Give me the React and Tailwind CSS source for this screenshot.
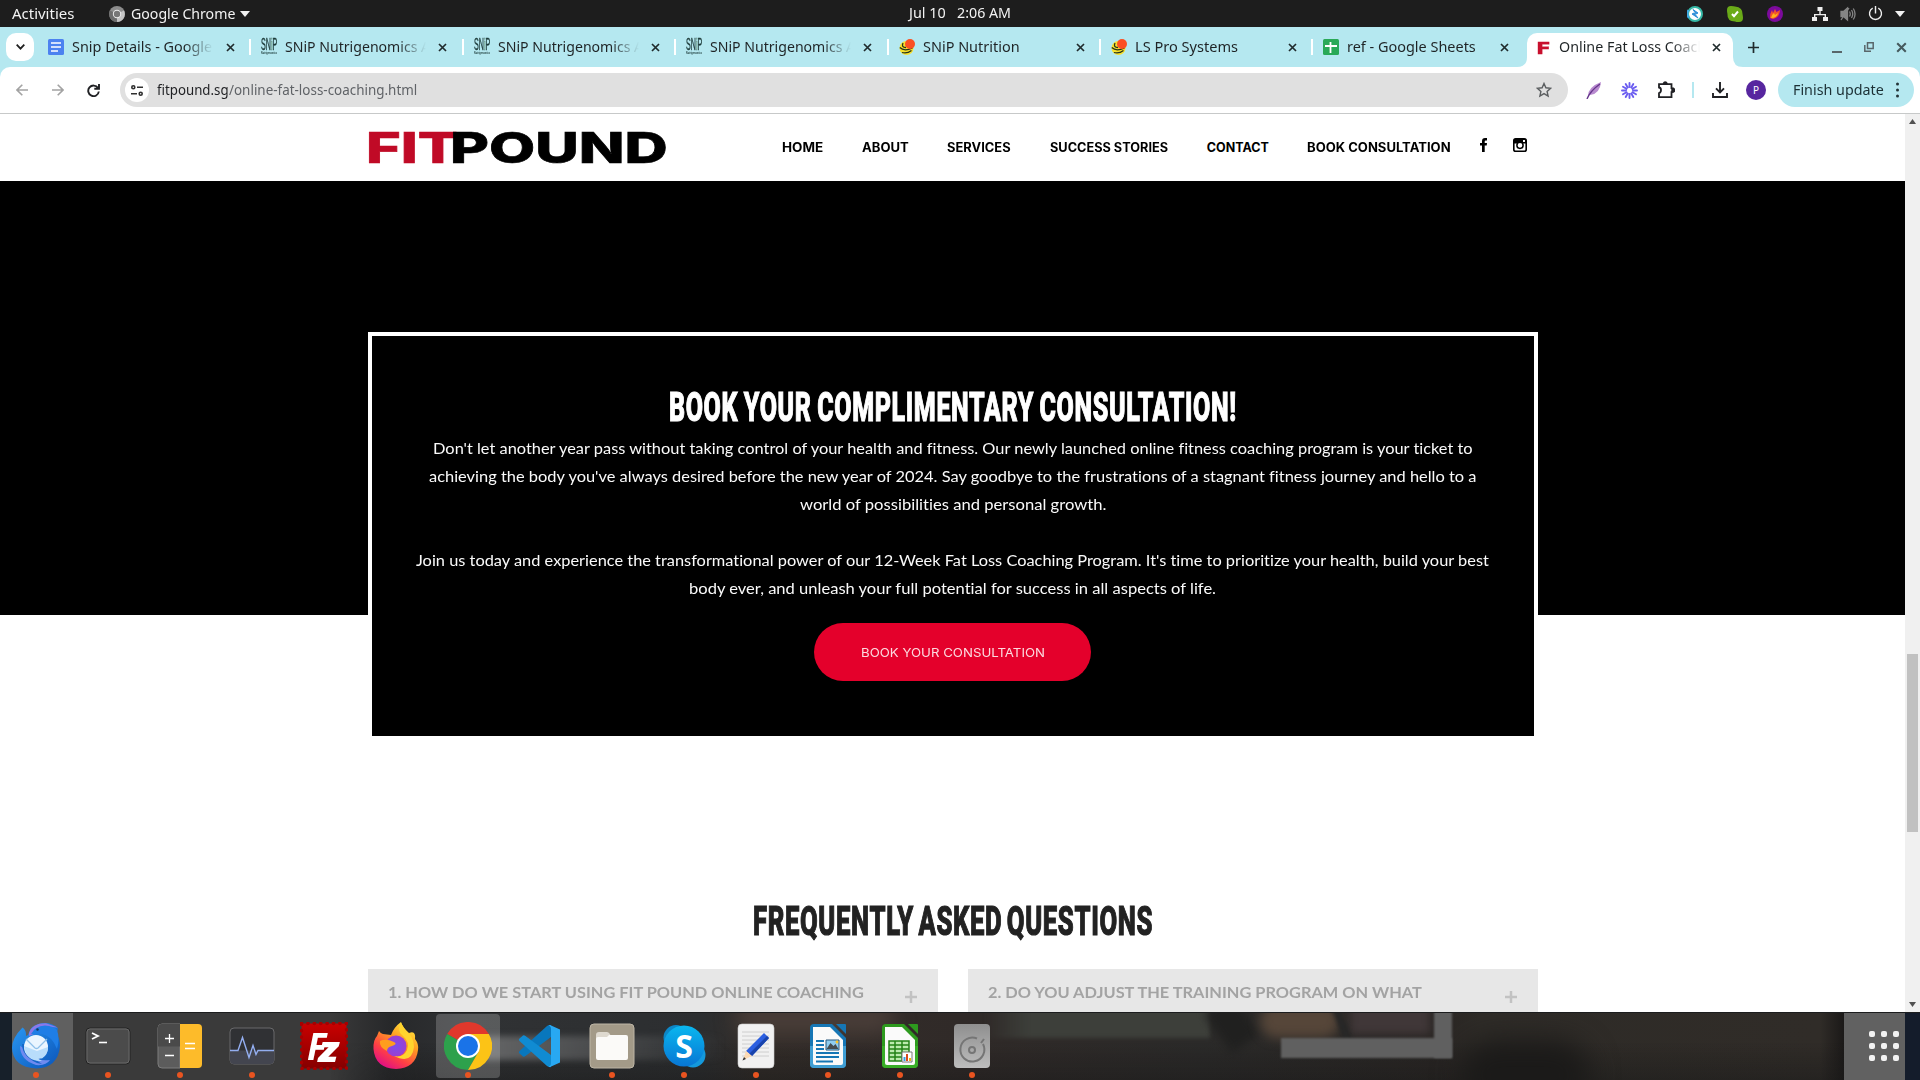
import { useLayoutEffect, useRef, useState } from "react";

// Scales a single line of text horizontally so it fills its container's width.
function Fit({ className = "", inner = "", children }) {
  const box = useRef(null);
  const text = useRef(null);
  const [k, setK] = useState(1);
  useLayoutEffect(() => {
    setK(box.current.clientWidth / text.current.offsetWidth);
  }, []);
  return (
    <span ref={box} className={`block shrink-0 ${className}`}>
      <span
        ref={text}
        className={`inline-block origin-left whitespace-nowrap ${inner}`}
        style={{ transform: `scaleX(${k})` }}
      >
        {children}
      </span>
    </span>
  );
}

const UI = "font-['Noto_Sans',sans-serif]";

/* ---------- System bar ---------- */

function SystemBar() {
  return (
    <div className={`relative flex h-[27px] shrink-0 items-center bg-[#1d1d1d] pl-3 text-[14px] leading-[27px] text-[#f2f2f2] ${UI}`}>
      <Fit className="w-[62px]">Activities</Fit>
      <svg className="ml-[35px] h-4 w-4 shrink-0" viewBox="0 0 16 16">
        <circle cx="8" cy="8" r="8" fill="#8c8c8c" />
        <path d="M8 8 15 4.500A8 8 0 0 1 8 16Z" fill="#c4c4c4" />
        <path d="M1 4.500 8 8 8 16A8 8 0 0 1 1 4.500" fill="#6d6d6d" />
        <circle cx="8" cy="8" r="4.200" fill="#ededed" />
        <circle cx="8" cy="8" r="3.200" fill="#777" />
      </svg>
      <Fit className="ml-1.5 w-[104px]">Google Chrome</Fit>
      <svg className="ml-[5px] h-[6px] w-[10px]" viewBox="0 0 10 6"><path d="M0 0h10L5 6z" fill="#f2f2f2" /></svg>
      <div className="absolute inset-x-0 top-0 flex h-[27px] justify-center gap-[11px] leading-[26px]">
        <Fit className="w-[37px]">Jul 10</Fit>
        <Fit className="w-[54px]">2:06 AM</Fit>
      </div>
      <div className="ml-auto flex items-center pr-[15px]">
        <svg className="h-4 w-4" viewBox="0 0 16 16">
          <circle cx="8" cy="8" r="7" fill="#fff" stroke="#35b8a6" strokeWidth="2" />
          <path d="M1.500 4A7 7 0 0 0 2 12" stroke="#3fa8e8" strokeWidth="2" fill="none" />
          <path d="M6 3.500 11 7 9 8zM5 8l2-1 4 5z" fill="#2e8fd8" stroke="#2e8fd8" />
        </svg>
        <svg className="ml-6 h-4 w-4" viewBox="0 0 16 16">
          <path d="M0 4Q0 0 4 0 7 0 8 .5 16 1 15.700 9 16 11 16 12 16 16 12 16 9 16 8 15.500 0 15.500.4 7.500 0 6 0 4" fill="#6aaa18" />
          <path d="m5 8 2 2.200L11 5.500" fill="none" stroke="#fff" strokeWidth="2" />
        </svg>
        <svg className="ml-6 h-4 w-4" viewBox="0 0 16 16">
          <circle cx="8" cy="8" r="8" fill="#7c0a9c" />
          <path d="M3 12Q3 7 5 4L6 7 8 3 9.500 6 13 4Q13 11 6 13z" fill="#f4512a" />
          <path d="M4 12Q5 8 7 7L8 9 11 7Q10 12 4 12" fill="#ffb31a" />
        </svg>
        <svg className="ml-[29px] h-4 w-4" viewBox="0 0 16 16" fill="#eee">
          <path d="M5.500 1h5v4h-5zM0 11h5v4H0zM11 11h5v4h-5zM7.300 5h1.400v3H14v3h-1.400V9.300H3.400V11H2V8h5.300z" />
        </svg>
        <svg className="ml-3 h-4 w-4" viewBox="0 0 16 16" fill="none" stroke="#858585" strokeWidth="1.300">
          <path d="M1 5.500h2.500L7.500 2v12L3.500 10.500H1z" fill="#858585" />
          <path d="M9.500 5.500Q11 8 9.500 10.500M11.500 4q2.500 4 0 8M13.300 2.500q3.500 5.500 0 11M1 14 9 2" />
        </svg>
        <svg className="ml-3 h-[15px] w-[15px]" viewBox="0 0 16 16" fill="none" stroke="#eee" strokeWidth="1.500">
          <path d="M8 0v8M5 2.300a6.400 6.400 0 1 0 6 0" />
        </svg>
        <svg className="ml-3 h-[6px] w-[10px]" viewBox="0 0 10 6"><path d="M0 0h10L5 6z" fill="#f2f2f2" /></svg>
      </div>
    </div>
  );
}

/* ---------- Browser chrome ---------- */

function DocsIcon() {
  return (
    <svg className="h-4 w-4" viewBox="0 0 16 16">
      <rect width="16" height="16" rx="1.500" fill="#4c82f0" />
      <path d="M3 4h10M3 8h10M3 12h7" stroke="#fff" strokeWidth="1.700" />
    </svg>
  );
}
function SnipIcon() {
  return (
    <div className="-mt-px flex h-[17px] w-4 flex-col font-['Liberation_Sans',sans-serif] text-[#1d3b3a]">
      <Fit className="h-[13px] w-4 leading-[13px]" inner="align-top text-[16px] leading-[13px] [-webkit-text-stroke:0.4px_#1d3b3a]">SN<span className="text-[#8cc4a0]">i</span>P</Fit>
      <Fit className="h-1 w-4 text-[4px] leading-[4px]" inner="align-top font-bold">Nutrigenomics</Fit>
    </div>
  );
}
function NutritionIcon() {
  return (
    <svg className="h-4 w-4" viewBox="0 0 16 16">
      <circle cx="7.500" cy="9" r="7" fill="#f7e02c" />
      <path d="M.8 8.500Q5 12.800 13.500 9M3 13.500q5 1.500 9.500-2M4 4Q2 8.500 7 8.500" fill="none" stroke="#26331c" strokeWidth="1.300" />
      <circle cx="11" cy="5" r="5" fill="#fb4f22" />
    </svg>
  );
}
function SheetsIcon() {
  return (
    <svg className="h-4 w-4" viewBox="0 0 16 16">
      <rect width="16" height="16" rx="1.500" fill="#29a957" />
      <path d="M2 7h12M7.500 3v11" stroke="#fff" strokeWidth="1.800" />
    </svg>
  );
}
function FIcon() {
  return (
    <Fit className="-mt-0.5 h-4 w-[15px]" inner="font-['DejaVu_Sans',sans-serif] text-[16px] font-bold leading-[16px] text-[#c8102e] [-webkit-text-stroke:0.3px_#c8102e]">F</Fit>
  );
}

const tabs = [
  { icon: DocsIcon, title: "Snip Details - Google", w: "w-[140px]" },
  { icon: SnipIcon, title: "SNiP Nutrigenomics A", w: "w-[145px]", sep: true },
  { icon: SnipIcon, title: "SNiP Nutrigenomics A", w: "w-[145px]", sep: true },
  { icon: SnipIcon, title: "SNiP Nutrigenomics A", w: "w-[145px]", sep: true },
  { icon: NutritionIcon, title: "SNiP Nutrition", w: "w-[97px]", sep: true },
  { icon: NutritionIcon, title: "LS Pro Systems", w: "w-[103px]", sep: true },
  { icon: SheetsIcon, title: "ref - Google Sheets", w: "w-[129px]", sep: true, short: true },
  { icon: FIcon, title: "Online Fat Loss Coach", w: "w-[147px]", active: true },
];

function Close({ className = "h-[9px] w-[9px]" }) {
  return (
    <svg className={`shrink-0 ${className}`} viewBox="0 0 9 9"><path d="m1 1 7 7M8 1 1 8" stroke="#202b2d" strokeWidth="1.700" /></svg>
  );
}

function TabStrip() {
  return (
    <div className={`flex h-10 shrink-0 items-start bg-[#b5e8f0] pt-1.5 text-[14px] text-[#1f2426] ${UI}`}>
      <div className="ml-1.5 flex h-7 w-7 shrink-0 items-center justify-center rounded-[10px] bg-white">
        <svg className="h-[6px] w-[9px]" viewBox="0 0 9 6" fill="none" stroke="#1f1f1f" strokeWidth="1.800"><path d="m.7.7 3.800 3.900L8.300.7" /></svg>
      </div>
      <div className="ml-[3px] flex">
        {tabs.map((t, i) => {
          const Icon = t.icon;
          return (
            <div key={i} className="relative flex h-[34px] w-[212.4px] shrink-0">
              {t.active && (
                <div className="absolute top-0 left-[3px] h-[34px] w-[206px] rounded-t-[10px] bg-white">
                  <svg className="absolute bottom-0 -left-[10px] h-[10px] w-[10px]" viewBox="0 0 10 10"><path d="M10 0v10H0Q10 10 10 0" fill="#fff" /></svg>
                  <svg className="absolute -right-[10px] bottom-0 h-[10px] w-[10px]" viewBox="0 0 10 10"><path d="M0 0v10h10Q0 10 0 0" fill="#fff" /></svg>
                </div>
              )}
              <div className="relative flex h-7 w-full items-center">
                <div className={t.sep ? "h-4 w-[2px] bg-white" : "h-4 w-[2px]"} />
                <div className={t.active ? "ml-[10px] w-4" : t.sep ? "ml-[10px] w-4" : "ml-[9px] w-4"}><Icon /></div>
                <div className={`${t.active ? "ml-[7px]" : "ml-2"} h-7 w-[141px] overflow-hidden leading-7 ${t.short ? "" : "[mask-image:linear-gradient(to_right,black_80%,transparent)]"}`}>
                  <Fit className={t.w}>{t.title}</Fit>
                </div>
                <Close className={t.active || t.sep ? "ml-3 h-[9px] w-[9px]" : "ml-[13px] h-[9px] w-[9px]"} />
              </div>
            </div>
          );
        })}
      </div>
      <div className="ml-3 flex h-7 flex-1 items-center">
        <svg className="h-[11px] w-[11px]" viewBox="0 0 11 11"><path d="M5.500 0v11M0 5.500h11" stroke="#202b2d" strokeWidth="1.700" /></svg>
        <div className="mr-[13px] ml-auto flex items-center gap-[22px]">
          <svg className="h-[11px] w-[10px]" viewBox="0 0 10 11"><path d="M0 10h10" stroke="#59666a" strokeWidth="2" /></svg>
          <svg className="h-[10px] w-[10px]" viewBox="0 0 10 10" fill="none" stroke="#59666a" strokeWidth="1.500"><path d="M3.500.8h5.700v5.700H3.500zM.8 3v6.200H7" /></svg>
          <Close className="h-[11px] w-[11px] opacity-75" />
        </div>
      </div>
    </div>
  );
}

function Toolbar() {
  return (
    <div className="bg-[#b5e8f0]">
      <div className={`flex h-[47px] items-center rounded-t-[10px] border-b border-[#c7c9c9] bg-white text-[14px] ${UI}`}>
        <svg className="ml-4 h-3 w-3" viewBox="0 0 12 12" fill="none" stroke="#a3a3a3" strokeWidth="1.600"><path d="M12 6H1M6.300.7 1 6l5.300 5.300" /></svg>
        <svg className="ml-6 h-3 w-3" viewBox="0 0 12 12" fill="none" stroke="#a3a3a3" strokeWidth="1.600"><path d="M0 6h11M5.700.7 11 6l-5.300 5.300" /></svg>
        <svg className="ml-[23px] h-[13px] w-[13px]" viewBox="0 0 13 13" fill="none" stroke="#202124" strokeWidth="1.900"><path d="M11 4A5.300 5.300 0 1 0 11.800 7.500M12 0v4.700H7.300" /></svg>
        <div className="ml-5 flex h-[34px] w-[1448px] items-center rounded-full bg-[#e0e0e0] pl-[5px]">
          <div className="flex h-6 w-6 items-center justify-center rounded-full bg-white">
            <svg className="h-[11px] w-3" viewBox="0 0 12 11" fill="none" stroke="#303030" strokeWidth="1.600"><circle cx="2.300" cy="2.300" r="1.500" /><path d="M6 2.300h6M0 8.700h6" /><circle cx="9.700" cy="8.700" r="1.500" /></svg>
          </div>
          <Fit className="-mt-0.5 ml-2 w-[72px]" inner="text-[#1f2023]">fitpound.sg</Fit>
          <Fit className="-mt-0.5 w-[188px]" inner="text-[#606367]">/online-fat-loss-coaching.html</Fit>
          <svg className="mr-4 ml-auto h-4 w-4" viewBox="0 0 16 16" fill="none" stroke="#5b5e60" strokeWidth="1.400"><path d="m8 1.500 1.900 4.300 4.700.5-3.500 3.100 1 4.600L8 11.600 3.900 14l1-4.600L1.400 6.300l4.700-.5z" /></svg>
        </div>
        <svg className="ml-[18px] h-[17px] w-4" viewBox="0 0 16 17"><path d="M2 14Q2 5 15 0 14 12 4 13z" fill="#b98bd0" /><path d="M1 17Q4 9 14 2" stroke="#66368c" strokeWidth="1.400" fill="none" /></svg>
        <svg className="ml-[19px] h-[17px] w-[17px]" viewBox="-8.500 -8.500 17 17" stroke="#6a5cf0" strokeWidth="1.900" strokeLinecap="round">
          <path d="M0-3.500V-7.500M0 3.500v4M3.500 0h4M-3.500 0h-4M1.800-3l2-3.500M3-1.800l3.500-2M3 1.800l3.500 2M1.800 3l2 3.500M-1.800 3l-2 3.500M-3 1.800l-3.500 2M-3-1.800l-3.500-2M-1.800-3l-2-3.500" />
        </svg>
        <svg className="ml-[19px] h-[18px] w-[18px]" viewBox="0 0 18 18" fill="none" stroke="#202124" strokeWidth="1.800"><path d="M2 3.200h12.500v4q3 0 3 2t-3 2v4.900H2v-4q2-.5 2-3t-2-2.600z" /><path d="M6 3Q6 .6 8.200.6T10.500 3z" fill="#202124" strokeWidth=".5" /><path d="M14.500 7q2.500 0 2.500 2.200t-2.500 2.200z" fill="#202124" strokeWidth=".5" /></svg>
        <div className="ml-[17px] h-4 w-[2px] bg-[#b5e8f0]" />
        <svg className="ml-[18px] h-4 w-4" viewBox="0 0 16 16" fill="none" stroke="#202124" strokeWidth="1.900"><path d="M8 0v10M4 6.300l4 4 4-4M1 11v4h14v-4" /></svg>
        <div className="ml-[18px] flex h-5 w-5 items-center justify-center rounded-full bg-[#57269f] text-[10px] text-white">P</div>
        <div className="ml-3 flex h-[34px] w-[136px] items-center rounded-full bg-[#b5e8f0] pl-[15px]">
          <Fit className="-mt-0.5 w-[91px]" inner="text-[#1c3035]">Finish update</Fit>
          <svg className="ml-3 h-4 w-[3px]" viewBox="0 0 3 16" fill="#243438"><circle cx="1.500" cy="2" r="1.500" /><circle cx="1.500" cy="8" r="1.500" /><circle cx="1.500" cy="14" r="1.500" /></svg>
        </div>
      </div>
    </div>
  );
}

/* ---------- Web page ---------- */

const nav = [
  ["HOME", "w-[41px]"],
  ["ABOUT", "w-[47px]"],
  ["SERVICES", "w-[64px]"],
  ["SUCCESS STORIES", "w-[118px]"],
  ["CONTACT", "w-[62px]"],
  ["BOOK CONSULTATION", "w-[144px]"],
];

function SiteHeader() {
  return (
    <header className="flex h-[67px] items-center bg-white pl-[366px]">
      <div className="flex h-[42px] w-[302px] font-['Inter',sans-serif] text-[42px] leading-[42px] font-extrabold">
        <Fit className="w-[92px]" inner="text-[#c00a26] [-webkit-text-stroke:0.6px_#c00a26]">FIT</Fit>
        <Fit className="-ml-[8px] w-[218px]" inner="text-black [-webkit-text-stroke:0.6px_#000]">POUND</Fit>
      </div>
      <nav className="mt-px ml-[114px] flex gap-[38.700px] font-['Inter',sans-serif] text-[12.500px] leading-5 font-bold text-black">
        {nav.map(([label, w]) => <Fit key={label} className={w}>{label}</Fit>)}
      </nav>
      <svg className="mb-[5px] ml-[29px] h-[14px] w-[7px]" viewBox="0 0 7 14"><path d="M7 .1V2.400H5.700Q4.700 2.400 4.700 3.400V5H7L6.700 7.400H4.700V14H2V7.400H0V5h2V3.100Q2 0 5 0z" /></svg>
      <svg className="mb-[5px] ml-[26px] h-[14px] w-[14px]" viewBox="0 0 14 14"><rect x=".8" y=".8" width="12.400" height="12.400" rx="1.800" fill="none" stroke="#000" strokeWidth="1.600" /><path d="M1 1h12v4.500H1z" /><circle cx="7" cy="7.300" r="3.100" fill="#fff" stroke="#000" strokeWidth="1.500" /><path d="M10 2h2v2h-2z" fill="#fff" /></svg>
    </header>
  );
}

function Consultation() {
  return (
    <section className="flex h-[434px] justify-center bg-black pt-[151px]">
      <div className="flex h-[408px] w-[1170px] flex-col items-center border-4 border-white bg-black pt-[52px] text-white">
        <Fit className="h-10 w-[568px]" inner="font-['Roboto',sans-serif] text-[40px] leading-10 font-extrabold tracking-[1px] [word-spacing:-2px] [-webkit-text-stroke:1.2px_#fff]">BOOK YOUR COMPLIMENTARY CONSULTATION!</Fit>
        <div className="mt-[6px] flex flex-col items-center font-['Lato',sans-serif] text-[16px] leading-7 text-[#fafafa] [font-variant-ligatures:none]">
          <Fit className="w-[1040px]">Don't let another year pass without taking control of your health and fitness. Our newly launched online fitness coaching program is your ticket to</Fit>
          <Fit className="w-[1048px]">achieving the body you've always desired before the new year of 2024. Say goodbye to the frustrations of a stagnant fitness journey and hello to a</Fit>
          <Fit className="w-[306px]">world of possibilities and personal growth.</Fit>
          <Fit className="mt-7 w-[1073px]">Join us today and experience the transformational power of our 12-Week Fat Loss Coaching Program. It's time to prioritize your health, build your best</Fit>
          <Fit className="w-[527px]">body ever, and unleash your full potential for success in all aspects of life.</Fit>
        </div>
        <div className="mt-[21px] flex h-[58px] w-[277px] shrink-0 items-center justify-center rounded-full bg-[#e4002b]">
          <Fit className="-mt-[3px] w-[184px]" inner="font-['Inter',sans-serif] text-[12px] leading-5 text-[#fcd9df]">BOOK YOUR CONSULTATION</Fit>
        </div>
      </div>
    </section>
  );
}

function Question({ w, children }) {
  return (
    <div className="flex h-[60px] flex-1 bg-[#e7e7e7] pr-[21px] pl-5 font-['Lato',sans-serif] text-[16px] text-[#a3a3a3]">
      <Fit className={`mt-[9px] ${w}`} inner="font-bold leading-7">{children}</Fit>
      <svg className="mt-[22px] ml-auto h-3 w-3" viewBox="0 0 12 12"><path d="M6 0v12M0 6h12" stroke="#c2c2c2" strokeWidth="2.500" /></svg>
    </div>
  );
}

function Page() {
  return (
    <div className="flex h-[898px] shrink-0 overflow-hidden bg-white">
      <main className="w-[1905px] shrink-0">
        <SiteHeader />
        <Consultation />
        <section className="flex flex-col items-center pt-[287px]">
          <Fit className="h-10 w-[400px]" inner="font-['Roboto',sans-serif] text-[40px] leading-10 font-extrabold tracking-[1px] text-[#222] [word-spacing:-4px] [-webkit-text-stroke:1.2px_#222]">FREQUENTLY ASKED QUESTIONS</Fit>
          <div className="mt-[27px] flex w-[1170px] gap-[30px]">
            <Question w="w-[476px]">1. HOW DO WE START USING FIT POUND ONLINE COACHING</Question>
            <Question w="w-[434px]">2. DO YOU ADJUST THE TRAINING PROGRAM ON WHAT</Question>
          </div>
        </section>
      </main>
      <aside className="flex w-[15px] flex-col items-center bg-[#f0f0f0] py-[5px]">
        <svg className="h-[5px] w-[7px]" viewBox="0 0 7 5"><path d="M0 5h7L3.500 0z" fill="#505050" /></svg>
        <div className="mt-[530px] h-[178px] w-[11px] bg-[#c1c1c1]" />
        <svg className="mt-auto h-[5px] w-[7px]" viewBox="0 0 7 5"><path d="M0 0h7L3.500 5z" fill="#505050" /></svg>
      </aside>
    </div>
  );
}

/* ---------- Dock ---------- */

const S = "h-12 w-12";

function Thunderbird() {
  return (
    <svg className={S} viewBox="0 0 48 48">
      <defs>
        <linearGradient id="tb" x1="0" y1="0" x2="1" y2="1"><stop offset="0" stopColor="#2a9af5" /><stop offset="1" stopColor="#0b54b8" /></linearGradient>
      </defs>
      <path d="M10.500 5.500Q0 16 0 26 1 45 24 46.500 46 46 48 24 48 17 44.500 12L46 6.500Q41 .5 31 1 19 2 16 13L14 14Q14.500 8 10.500 5.500" fill="url(#tb)" />
      <path d="M17 11Q20 1 34 1.200L46 5.500Q32 3.500 27 8T17 14" fill="#8b78ea" />
      <path d="M19 12Q23 4 33 3.500 42 4 45 8 48 16 45 27 40 14 30 12z" fill="#1f7ee6" />
      <path d="M8 24Q8 38 24 43 34 44 38 38 20 40 14 27z" fill="#6f8bf0" />
      <path d="M10 22Q10 34 25 41L30 42Q16 34 14 22z" fill="#1566c9" />
      <circle cx="24" cy="25" r="12" fill="#eaf5ff" />
      <path d="M12 24Q14 40 30 39 22 35 30 36.500 36 33 36 25L25 29z" fill="#b8ddfb" />
      <path d="m14 17 9 9q1.500 1 3 0l9-9" fill="none" stroke="#8fc0ea" strokeWidth="1.300" />
      <circle cx="25.500" cy="7.500" r="1.200" fill="#17335f" />
    </svg>
  );
}
function Terminal() {
  return (
    <svg className={S} viewBox="0 0 48 48">
      <rect x="2" y="6" width="44" height="36" rx="4" fill="#4b4b4b" stroke="#222" />
      <rect x="3" y="7" width="42" height="34" rx="3" fill="none" stroke="#686868" />
      <path d="m8 11 6 3-6 3" fill="none" stroke="#fff" strokeWidth="1.800" /><path d="M15 20.500h8" stroke="#fff" strokeWidth="1.600" />
    </svg>
  );
}
function Calculator() {
  return (
    <svg className={S} viewBox="0 0 48 48">
      <path d="M6 2h18v44H6q-4 0-4-4V6q0-4 4-4" fill="#5c5c5c" stroke="#7c7c7c" /><path d="M2 24.500h22V2H6Q2 2 2 6z" fill="#4a4a4a" />
      <path d="M24 2h18q4 0 4 4v36q0 4-4 4H24z" fill="#fdbb2a" />
      <path d="M9 16.500h9M13.500 12v9M9 33.500h9M29 21.500h10M29 26.500h10" stroke="#fff" strokeWidth="1.300" />
    </svg>
  );
}
function Monitor() {
  return (
    <svg className={S} viewBox="0 0 48 48">
      <rect x="2" y="6" width="44" height="36" rx="4" fill="#303134" stroke="#69696b" />
      <path d="M2 28.500h44V38q0 4-4 4H6q-4 0-4-4z" fill="#43454f" />
      <path d="M2 28.500h8l4.500-13 6.500 20 4-12 3 9 2-4h16" fill="none" stroke="#93aef0" strokeWidth="1.400" />
    </svg>
  );
}
function FileZilla() {
  return (
    <div className="relative h-12 w-12">
      <svg className={S} viewBox="0 0 48 48">
        <defs><linearGradient id="fz" x1="0" y1="0" x2="0" y2="1"><stop offset="0" stopColor="#c90000" /><stop offset="1" stopColor="#850000" /></linearGradient></defs>
        <rect x="1.500" y="1.500" width="45" height="45" fill="url(#fz)" />
        <rect x="1.500" y="1.500" width="45" height="45" fill="none" stroke="#a60000" strokeWidth="3.600" strokeLinecap="round" strokeDasharray="0.100 6.300" />
      </svg>
      <div className="absolute top-[1px] left-[7px] font-['Open_Sans',sans-serif] text-[38px] leading-[44px] font-bold text-white italic">
        <Fit className="w-[19px]">F</Fit>
      </div>
      <div className="absolute top-[9px] left-[18px] font-['Open_Sans',sans-serif] text-[35px] leading-[36px] font-extrabold text-white italic">
        <Fit className="w-[21px]">z</Fit>
      </div>
    </div>
  );
}
function Firefox() {
  return (
    <svg className={S} viewBox="0 0 48 48">
      <defs>
        <linearGradient id="ff" x1=".85" y1=".1" x2=".3" y2="1"><stop offset="0" stopColor="#ffe53a" /><stop offset=".35" stopColor="#ff9a22" /><stop offset=".7" stopColor="#ff3f45" /><stop offset="1" stopColor="#e00f85" /></linearGradient>
        <radialGradient id="fp"><stop offset="0" stopColor="#7a4dee" /><stop offset="1" stopColor="#9c3fd0" /></radialGradient>
      </defs>
      <path d="M7 9Q9 12 11 12L19 13Q22 5 29 0 31 6 37 11 44 8 43 17 47 22 46 28 44 46 24 47 3 46 1.500 27 1 18 5 14z" fill="url(#ff)" />
      <circle cx="24" cy="24" r="10.500" fill="url(#fp)" />
      <path d="M8 19Q14 16 22 20 26 22 20 24 15 25 15 29 7 25 8 19" fill="#ff9d1e" />
      <path d="M29 1Q24 9 31 14 38 20 35 28 31 36 22 34 40 43 42 25 42 15 35 10 31 5 29 1" fill="#ffd42e" />
    </svg>
  );
}
function Chrome() {
  return (
    <svg className={S} viewBox="0 0 48 48">
      <path d="M24 24 3.200 12A24 24 0 0 1 44.800 12z" fill="#e0382c" />
      <path d="M24 24 3.200 12A24 24 0 0 0 24 48L34.400 30z" fill="#2da14c" />
      <path d="M24 12H44.800A24 24 0 0 1 24 48L34.400 30z" fill="#fcc316" />
      <circle cx="24" cy="24" r="12" fill="#fff" /><circle cx="24" cy="24" r="10" fill="#1a73e8" />
    </svg>
  );
}
function Code() {
  return (
    <svg className={S} viewBox="0 0 48 48">
      <path d="M3 31 7 34.500Q8 35 9.500 34L35 15V3Q33 2.500 31 4L3.500 29Q2.500 30 3 31" fill="#0877bd" />
      <path d="M3 17 7 13.500Q8 13 9.500 14L35 33V45Q33 45.500 31 44L3.500 19Q2.500 18 3 17" fill="#108bd2" />
      <path d="M34 3 44 7.500V40.500L34 45Q33.500 45.300 32.500 44.500 35 44 35 41V7Q35 4 32.500 3.500 33.500 2.800 34 3" fill="#28a8f2" />
    </svg>
  );
}
function Files() {
  return (
    <svg className={S} viewBox="0 0 48 48">
      <rect x="2" y="2" width="44" height="44" rx="4" fill="#a39a88" stroke="#bdb5a5" />
      <path d="M8 13q0-3 3-3h8q1.500 0 2.500 1.500L23 14v8H8z" fill="#ded9cf" /><path d="M8 17q0-2 2-2h9l2-2h17q2 0 2 2v21q0 2-2 2H10q-2 0-2-2z" fill="#fbfaf8" />
    </svg>
  );
}
function Skype() {
  return (
    <div className="relative h-12 w-12">
      <svg className={S} viewBox="0 0 48 48">
        <defs><linearGradient id="sk" x1="0" y1="0" x2="0" y2="1"><stop offset="0" stopColor="#0ab7ef" /><stop offset="1" stopColor="#0876d4" /></linearGradient></defs>
        <circle cx="16" cy="15.500" r="12.500" fill="#0d87c7" /><circle cx="33" cy="33" r="12.500" fill="#1499dc" />
        <circle cx="24" cy="24" r="20.500" fill="url(#sk)" />
      </svg>
      <div className="absolute inset-0 text-center font-['Open_Sans',sans-serif] text-[32px] leading-[48px] font-bold text-white">S</div>
    </div>
  );
}
function Editor() {
  return (
    <svg className={S} viewBox="0 0 48 48">
      <rect x="6" y="2" width="36" height="44" rx="4" fill="#f1f1f1" stroke="#ccc" strokeWidth=".6" />
      <path d="M10 10h27M10 14h27M10 18h27M10 22h27M10 26h27M10 30h27M10 34h27" stroke="#cecece" />
      <path d="m32 11 5 5-17 18-6-5z" fill="#2c5fe0" /><path d="m35 14 2 2-17 18-3-2z" fill="#1843ac" /><path d="m14 29 6 5-9 4z" fill="#fbd9b3" /><path d="m12 35 2 2-3.500 1.500z" fill="#333" />
    </svg>
  );
}
function Office({ writer }) {
  const c = writer ? "#1676b5" : "#2d9a1e";
  return (
    <svg className={S} viewBox="0 0 48 48">
      <path d="M10 2h18l14 14v26q0 4-4 4H10q-4 0-4-4V6q0-4 4-4" fill={c} /><path d="M6 24h36v18q0 4-4 4H10q-4 0-4-4z" fill={writer ? "#3f9ed4" : "#38ad26"} />
      <path d="M9 5h17l13 13v23q0 2-2 2H11q-2 0-2-2z" fill="#fafafa" /><path d="M32 2h9q1 0 1 1v9z" fill={c} />
      {writer ? (
        <g><path d="M12 19h8M12 23h8M12 27h8M12 31h23M12 35h23M12 39.500h17" stroke={c} strokeWidth="2" /><path d="M22 18h13v10H22z" fill="#8fcdf0" stroke="#28587c" /><path d="m22.500 27 4-6 3 3 2-2 3 5z" fill="#454c50" /><circle cx="33" cy="20" r="1.400" fill="#ffc423" /></g>
      ) : (
        <g><path d="M13 19h20v20H13z" fill="#bcebad" stroke="#238216" strokeWidth="1.500" /><path d="M13 23h20M13 27h20M13 31h20M13 35h20M19 19v20M26 19v20" stroke="#238216" strokeWidth="1.500" /><path d="M26 30h10v10H26z" fill="#fff" stroke="#777" /><path d="M28.500 39v-4" stroke="#38a0e8" strokeWidth="2" /><path d="M31 39v-7" stroke="#d94a1c" strokeWidth="2" /><path d="M34 39v-3" stroke="#efb60c" strokeWidth="2" /></g>
      )}
    </svg>
  );
}
function Disk() {
  return (
    <svg className={S} viewBox="0 0 48 48">
      <defs><linearGradient id="dk" x1="0" y1="0" x2="0" y2="1"><stop offset="0" stopColor="#8f8f8f" /><stop offset="1" stopColor="#bdbdbd" /></linearGradient></defs>
      <rect x="6" y="2" width="36" height="44" rx="4" fill="url(#dk)" />
      <path d="M29 16.500A12 12 0 1 0 35 22" fill="none" stroke="#757575" strokeWidth="2" /><path d="m33 21 3-4" stroke="#757575" strokeWidth="2" /><circle cx="24" cy="28" r="3" fill="none" stroke="#757575" strokeWidth="2" />
    </svg>
  );
}

const apps = [
  [<Thunderbird />, true], [<Terminal />, true], [<Calculator />, true], [<Monitor />, true],
  [<FileZilla />, false], [<Firefox />, false], [<Chrome />, true, true], [<Code />, false],
  [<Files />, true], [<Skype />, true], [<Editor />, true], [<Office writer />, true],
  [<Office />, true], [<Disk />, true],
];

function DockBackdrop() {
  return (
    <div className="absolute inset-0 overflow-hidden bg-[#26272a]">
      <div className="absolute inset-0 bg-[linear-gradient(to_right,#3a3a3a_0,#3a3a3a_330px,#27282a_390px,#303234_470px,#2c2e30_700px,#332d29_760px,#302a28_960px,#2b2a29_1200px,#2a2624_1440px,#2e2b27_1480px,#302c28_1820px,#1b1918_1844px)]" />
      <div className="absolute inset-0 bg-[linear-gradient(to_bottom,transparent_45%,rgba(25,25,25,0.45)_100%)] [mask-image:linear-gradient(to_right,transparent_330px,black_420px)]" />
      <div className="absolute top-6 left-[484px] h-6 w-[240px] bg-linear-to-r from-[#646566] to-transparent blur-[3px]" />
      <div className="absolute -top-2 left-[735px] h-[30px] w-[160px] rounded-full bg-[#4a3e39] blur-[10px]" />
      <div className="absolute -top-1 left-[985px] h-[30px] w-[225px] bg-linear-to-r from-transparent via-[#3d3f3a] via-20% to-[#3d3f3a] blur-[2px]" />
      <div className="absolute -top-3 left-[1215px] h-12 w-[34px] rotate-[-35deg] bg-[#20201f] blur-[5px]" />
      <div className="absolute -top-2 left-[1260px] h-[34px] w-[80px] rounded-full bg-[#564639] blur-[6px]" />
      <div className="absolute -top-2 left-[1350px] h-[30px] w-[80px] bg-[#403738] blur-[4px]" />
      <div className="absolute -top-3 left-[1338px] h-12 w-2 rotate-[-20deg] bg-[#262626] blur-[2px]" />
      <div className="absolute top-7 left-[1460px] h-[70px] w-[130px] rounded-full bg-[#1b1a19] blur-[14px]" />
      <div className="absolute top-[26px] left-[1281px] h-5 w-[171px] bg-[#606060] blur-[1px]" />
      <div className="absolute -top-1 left-[1434px] h-[50px] w-[18px] bg-[#606060] blur-[1px]" />
      <div className="absolute inset-y-0 left-0 w-3 bg-[#17202a]" />
      <div className="absolute inset-y-0 left-3 w-[61px] bg-[#606060]" />
      <div className="absolute inset-y-0 right-[15px] w-[61px] bg-[#616161]" />
      <div className="absolute inset-y-0 right-0 w-[15px] bg-[#141c2b]" />
      <div className="absolute inset-x-0 top-0 h-px bg-[#1c1d1e]" />
    </div>
  );
}

function Dock() {
  return (
    <div className="relative h-[68px] shrink-0">
      <DockBackdrop />
      <div className="relative flex h-full items-center justify-between">
        <div className="flex">
          {apps.map(([icon, running, focused], i) => (
            <div key={i} className="flex w-[72px] justify-center">
              <div className={`flex h-16 w-16 flex-col items-center rounded-[4px] pt-2 ${focused ? "bg-white/20" : ""}`}>
                {icon}
                {running && <span className="mt-[2px] h-1.5 w-1.5 rounded-full bg-[#e95420]" />}
              </div>
            </div>
          ))}
        </div>
        <div className="mr-[21px] grid grid-cols-3 gap-1.5">
          {Array.from({ length: 9 }, (_, i) => <span key={i} className="h-1.5 w-1.5 rounded-[2px] bg-[#f2f2f2]" />)}
        </div>
      </div>
    </div>
  );
}

export default function App() {
  return (
    <div className="flex h-[1080px] w-[1920px] flex-col overflow-hidden bg-white">
      <SystemBar />
      <TabStrip />
      <Toolbar />
      <Page />
      <Dock />
    </div>
  );
}
